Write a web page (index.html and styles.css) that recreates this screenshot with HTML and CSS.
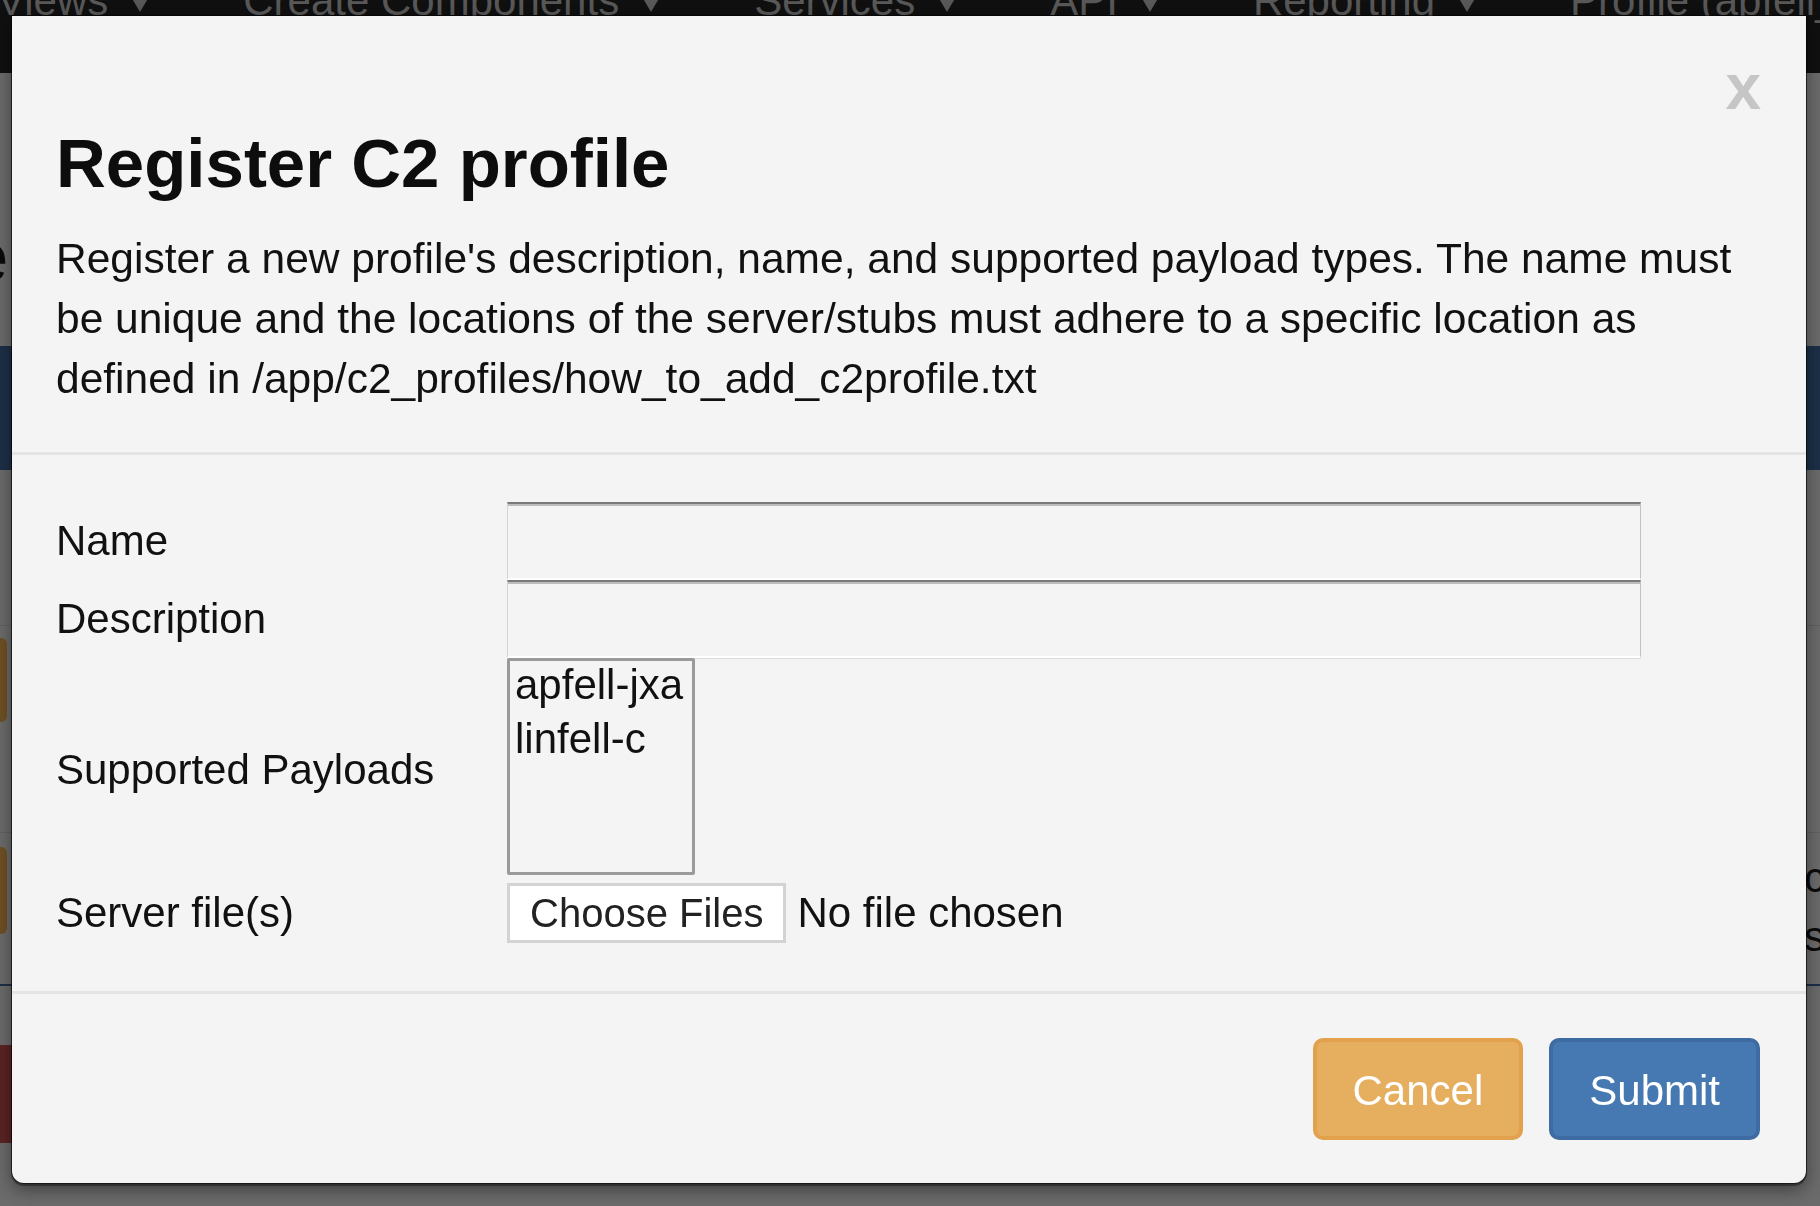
FILE: index.html
```html
<!DOCTYPE html>
<html lang="en">
<head>
<meta charset="utf-8">
<title>Register C2 profile</title>
<link rel="stylesheet" href="styles.css">
</head>
<body>
<div class="page">
  <nav class="navbar">
    <span class="nav-item first">Views<i class="caret"></i></span>
    <span class="nav-item">Create Components<i class="caret"></i></span>
    <span class="nav-item">Services<i class="caret"></i></span>
    <span class="nav-item">API<i class="caret"></i></span>
    <span class="nav-item">Reporting<i class="caret"></i></span>
    <span class="nav-item">Profile (apfell_admin)</span>
  </nav>
  <main class="content">
    <div class="page-head"><span class="page-head-text">Profile</span></div>
    <div class="banner"></div>
    <div class="list">
      <div class="list-row row-a"></div>
      <div class="list-row row-b"><span class="btn-bg warn"></span></div>
      <div class="list-row row-c">
        <span class="btn-bg warn tall"></span>
        <div class="row-text"><div>c2 profile</div><div>server</div></div>
      </div>
    </div>
    <div class="danger-row"><span class="btn-bg danger"></span></div>
  </main>
</div>

<div class="backdrop">
  <section class="modal">
    <header class="modal-header">
      <button class="close" type="button">x</button>
      <h2 class="modal-title">Register C2 profile</h2>
      <p class="lead">Register a new profile's description, name, and supported payload types. The name must be unique and the locations of the server/stubs must adhere to a specific location as defined in /app/c2_profiles/how_to_add_c2profile.txt</p>
    </header>
    <form class="modal-body">
      <label class="form-label" for="c2name">Name</label>
      <input class="text-input" id="c2name" type="text">

      <label class="form-label" for="c2desc">Description</label>
      <input class="text-input" id="c2desc" type="text">

      <label class="form-label payloads-label" for="c2payloads">Supported Payloads</label>
      <select class="listbox" id="c2payloads" multiple>
        <option>apfell-jxa</option>
        <option>linfell-c</option>
      </select>

      <label class="form-label files-label">Server file(s)</label>
      <div class="file-row">
        <label class="file-btn">Choose Files<input class="file-hidden" type="file" multiple></label>
        <span class="file-status">No file chosen</span>
      </div>
    </form>
    <footer class="modal-footer">
      <button class="btn btn-cancel" type="button">Cancel</button>
      <button class="btn btn-submit" type="button">Submit</button>
    </footer>
  </section>
</div>
</body>
</html>
```

FILE: styles.css
```css
* {
  box-sizing: border-box;
}

html,
body {
  margin: 0;
  padding: 0;
}

body {
  width: 1820px;
  height: 1206px;
  overflow: hidden;
  background: #6b6b6b;
  font-family: "Liberation Sans", Arial, Helvetica, sans-serif;
  color: #111;
}

/* ---------- page behind the dialog (dimmed) ---------- */
.page {
  width: 1820px;
  height: 1206px;
  overflow: hidden;
}

.navbar {
  height: 73px;
  background: #101010;
  display: flex;
  align-items: flex-start;
  gap: 90px;
  overflow: hidden;
  white-space: nowrap;
}

.nav-item {
  display: flex;
  align-items: flex-start;
  margin-top: -20px;
  font-size: 42px;
  line-height: 42px;
  color: #585858;
}

.nav-item.first {
  margin-left: -3px;
}

.caret {
  display: block;
  width: 0;
  height: 0;
  margin-top: 10px;
  margin-left: 19px;
  border-left: 13px solid transparent;
  border-right: 13px solid transparent;
  border-top: 22px solid #585858;
}

.content {
  display: flex;
  flex-direction: column;
}

.page-head {
  padding: 144px 0 49px;
  height: 273px;
  overflow: hidden;
}

.page-head-text {
  display: inline-block;
  margin-left: -190px;
  font-size: 70px;
  line-height: 80px;
  color: #0b0b0b;
}

.banner {
  height: 124px;
  background: #1d3048;
}

.list {
  display: flex;
  flex-direction: column;
  border-bottom: 2px solid #1d3048;
}

.list-row {
  display: flex;
  border-bottom: 1px solid #606060;
}

.list-row:last-child {
  border-bottom: 0;
}

.row-a {
  height: 156px;
}

.row-b {
  height: 207px;
  padding-top: 12px;
}

.row-c {
  height: 151px;
  padding-top: 14px;
  justify-content: space-between;
}

.btn-bg {
  display: block;
  width: 7px;
  height: 84px;
  border-radius: 0 6px 6px 0;
}

.btn-bg.tall {
  height: 87px;
}

.warn {
  background: #6e5024;
}

.danger {
  width: 12px;
  height: 98px;
  background: #5b2323;
  border-radius: 0;
}

.row-text {
  width: 16px;
  overflow: hidden;
  white-space: nowrap;
  font-size: 42px;
  line-height: 59px;
  color: #0b0b0b;
  padding-top: 1px;
}

.danger-row {
  padding-top: 59px;
}

/* ---------- dialog ---------- */
.backdrop {
  position: fixed;
  inset: 0;
  padding: 16px 0 0 12px;
}

.modal {
  width: 1794px;
  height: 1167px;
  background: #f4f4f4;
  border-radius: 0 0 12px 12px;
  box-shadow: 0 0 0 1px rgba(0, 0, 0, 0.45), 0 2px 0 1px rgba(0, 0, 0, 0.35), 0 6px 18px rgba(0, 0, 0, 0.45);
  display: flex;
  flex-direction: column;
}

.modal-header {
  display: flex;
  flex-direction: column;
  padding: 39px 46px 43px 44px;
  border-bottom: 3px solid #e4e4e4;
}

.close {
  align-self: flex-end;
  margin: 0 -1px 0 0;
  padding: 0;
  border: 0;
  background: transparent;
  font-family: "Liberation Sans", Arial, sans-serif;
  font-weight: bold;
  font-size: 64px;
  line-height: 64px;
  height: 64px;
  color: #c6c6c6;
  cursor: pointer;
}

.modal-title {
  margin: 7px 0 0;
  font-size: 69px;
  line-height: 76px;
  font-weight: bold;
  color: #0d0d0d;
}

.lead {
  margin: 27px 0 0;
  font-size: 42.5px;
  line-height: 60px;
  color: #111;
}

.modal-body {
  display: grid;
  grid-template-columns: 451px 1134px;
  grid-auto-rows: auto;
  align-items: center;
  padding: 47px 46px 48px 44px;
  margin: 0;
  border-bottom: 3px solid #e4e4e4;
}

.form-label {
  font-size: 42px;
  line-height: 60px;
  color: #111;
}

.payloads-label {
  margin-top: 7px;
}

.files-label {
  margin-top: 8px;
}

.text-input {
  display: block;
  width: 1134px;
  height: 78px;
  margin: 0;
  padding: 0 10px;
  background: transparent;
  font-family: inherit;
  font-size: 42px;
  border-style: solid;
  border-width: 2px 1px 2px 1px;
  border-color: #7a7a7a #c2c2c2 #ffffff #d4d4d4;
  box-shadow: inset 0 2px 0 #bdbdbd, 0 1px 0 #dcdcdc;
  outline: none;
}

.listbox {
  display: block;
  width: 188px;
  height: 217px;
  margin: 0;
  padding: 0 2px;
  border: 3px solid #9a9a9a;
  background: #f4f4f4;
  font-family: "Liberation Sans", Arial, sans-serif;
  font-size: 42px;
  color: #111;
  overflow: hidden;
  outline: none;
}

.listbox option {
  padding: 0 3px 6px;
  color: #111;
}

.file-row {
  display: flex;
  align-items: center;
  margin-top: 8px;
}

.file-btn {
  display: block;
  height: 60px;
  padding: 0 20px;
  background: #ffffff;
  border: 3px solid #d3d3d3;
  font-size: 40px;
  line-height: 54px;
  color: #222;
  cursor: pointer;
}

.file-hidden {
  display: none;
}

.file-status {
  margin-left: 11px;
  font-size: 42px;
  line-height: 60px;
  color: #111;
}

.modal-footer {
  display: flex;
  justify-content: flex-end;
  gap: 26px;
  padding: 44px 46px 0;
}

.btn {
  height: 102px;
  padding: 19px 36px 15px;
  border: 4px solid;
  border-radius: 10px;
  font-family: "Liberation Sans", Arial, sans-serif;
  font-size: 42px;
  line-height: 60px;
  color: #ffffff;
  cursor: pointer;
}

.btn-cancel {
  background: #e6ae5f;
  border-color: #e2a24d;
}

.btn-submit {
  background: #4679b2;
  border-color: #3e6ba1;
}
```
